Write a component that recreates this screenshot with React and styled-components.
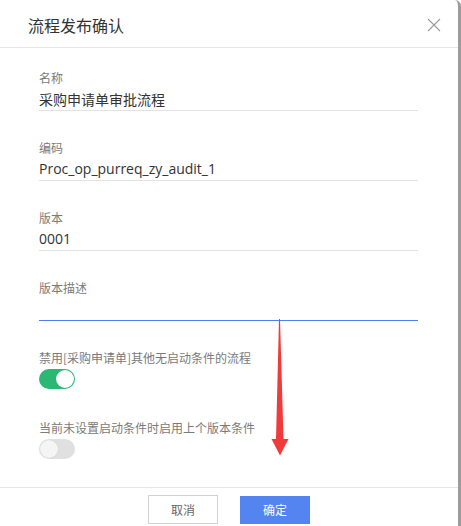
import React from "react";
import styled, { createGlobalStyle } from "styled-components";

const Global = createGlobalStyle`
  html, body { margin: 0; padding: 0; background: #fff; }
  body { font-family: "Open Sans", "Noto Sans CJK SC", sans-serif; }
  * { box-sizing: border-box; }
`;

const Dialog = styled.div`
  position: relative;
  width: 461px;
  height: 526px;
  background: #fff;
  border-right: 3px solid #9b9b9b;
  border-top-right-radius: 6px;
  display: flex;
  flex-direction: column;
  overflow: hidden;
`;

const Header = styled.div`
  height: 50px;
  border-bottom: 1px solid #e6e6e6;
  display: flex;
  align-items: center;
  justify-content: space-between;
  padding: 3px 17px 0 28px;
`;

const Title = styled.div`
  font-size: 16px;
  color: #333;
  font-family: "Noto Sans CJK SC", sans-serif;
`;

const Close = styled.button`
  border: 0;
  background: none;
  padding: 0;
  width: 14px;
  height: 14px;
  display: flex;
  cursor: pointer;
`;

const Body = styled.div`
  flex: 1;
  padding: 19px 40px 0 39px;
`;

const Field = styled.div`
  margin-bottom: 26px;
`;

const Label = styled.div`
  font-family: "Noto Sans CJK SC", sans-serif;
  font-size: 12px;
  line-height: 21px;
  color: #7a7a7a;
`;

const Value = styled.div`
  font-size: 14px;
  line-height: 22px;
  height: 23px;
  color: #333;
  border-bottom: 1px solid ${(p) => (p.$active ? "#4f80ee" : "#e3e3e3")};
  font-family: ${(p) => (p.$latin ? `"Open Sans", sans-serif` : `"Noto Sans CJK SC", sans-serif`)};
`;

const SwitchField = styled.div`
  margin-bottom: 28px;
`;

const Switch = styled.div`
  margin-top: 1px;
  width: 36px;
  height: 20px;
  border-radius: 10px;
  background: ${(p) => (p.$on ? "#2bb873" : "#e0e0e0")};
  display: flex;
  align-items: center;
  justify-content: ${(p) => (p.$on ? "flex-end" : "flex-start")};
  padding: 0 1px;
`;

const Knob = styled.div`
  width: 18px;
  height: 18px;
  border-radius: 50%;
  background: ${(p) => (p.$on ? "#fff" : "#f5f5f5")};
  box-shadow: 0 0 1px rgba(0, 0, 0, 0.15);
`;

const Footer = styled.div`
  height: 41px;
  border-top: 1px solid #e6e6e6;
  display: flex;
  justify-content: center;
  align-items: flex-start;
  gap: 22px;
  padding-top: 7px;
`;

const Button = styled.button`
  width: 70px;
  height: ${(p) => (p.$primary ? "28px" : "29px")};
  margin-top: ${(p) => (p.$primary ? "1px" : "0")};
  border: ${(p) => (p.$primary ? "0" : "1px solid #cfd3d8")};
  background: ${(p) => (p.$primary ? "#5384f0" : "#fff")};
  color: ${(p) => (p.$primary ? "#fff" : "#666")};
  font-family: "Noto Sans CJK SC", sans-serif;
  font-size: 12px;
  padding: 0;
`;

const Arrow = styled.svg`
  position: absolute;
  left: 270px;
  top: 318px;
`;

export default function App() {
  return (
    <>
      <Global />
      <Dialog>
        <Header>
          <Title>流程发布确认</Title>
          <Close aria-label="close">
            <svg width="14" height="14" viewBox="0 0 14 14">
              <path d="M1 1 L13 13 M13 1 L1 13" stroke="#9a9a9a" strokeWidth="1.1" fill="none" />
            </svg>
          </Close>
        </Header>
        <Body>
          <Field>
            <Label>名称</Label>
            <Value>采购申请单审批流程</Value>
          </Field>
          <Field>
            <Label>编码</Label>
            <Value $latin>Proc_op_purreq_zy_audit_1</Value>
          </Field>
          <Field>
            <Label>版本</Label>
            <Value $latin>0001</Value>
          </Field>
          <Field>
            <Label>版本描述</Label>
            <Value $active />
          </Field>
          <SwitchField>
            <Label>禁用[采购申请单]其他无启动条件的流程</Label>
            <Switch $on>
              <Knob $on />
            </Switch>
          </SwitchField>
          <SwitchField>
            <Label>当前未设置启动条件时启用上个版本条件</Label>
            <Switch>
              <Knob />
            </Switch>
          </SwitchField>
        </Body>
        <Footer>
          <Button>取消</Button>
          <Button $primary>确定</Button>
        </Footer>
        <Arrow width="20" height="140" viewBox="270 318 20 140">
          <polygon
            points="279,319 280,319 283.5,439 288.5,439 280,455.5 271.5,439 276,439"
            fill="#f03a3c"
          />
        </Arrow>
      </Dialog>
    </>
  );
}
